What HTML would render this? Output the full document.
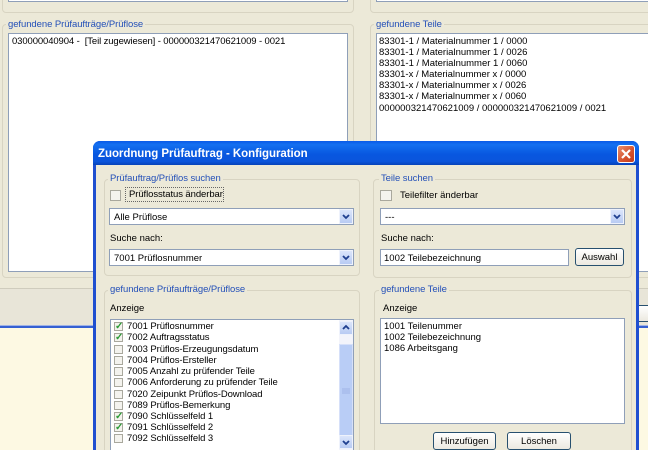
<!DOCTYPE html>
<html><head><meta charset="utf-8">
<style>
html,body{margin:0;padding:0;background:#ece9d8;}
#p{position:relative;width:648px;height:450px;overflow:hidden;background:#ece9d8;font:9.5px/11px "Liberation Sans",sans-serif;color:#000;filter:blur(.35px);}
#p div{position:absolute;box-sizing:border-box;}
.t{white-space:nowrap;height:11px;}
.n{letter-spacing:-.08px;}
.b{color:#2450b8;background:#ece9d8;padding:0 2px;letter-spacing:-.07px;}
.g{border:1px solid #d8d4c2;border-radius:4px;}
.w{background:#fff;border:1px solid #8f9fb8;}
.a{background:linear-gradient(#dbe5fb,#b8cbf3);border:1px solid #eef2fc;}
.btn{background:linear-gradient(#fff,#ece9e0);border:1px solid #27506f;border-radius:3px;text-align:center;line-height:17px;}
.c{width:10px;height:10px;background:#f4f3ee;border:1px solid #a9a89d;}
.k{color:#2a9a35;font-size:10px;line-height:8px;font-weight:bold;text-align:center;}
svg{position:absolute;left:0;top:0;}
</style></head><body><div id="p">

<!-- background window -->
<div class="g" style="left:2px;top:-20px;width:352px;height:33px"></div>
<div class="g" style="left:370px;top:-20px;width:290px;height:33px"></div>
<div class="w" style="left:8px;top:-10px;width:340px;height:12px"></div>
<div class="w" style="left:376px;top:-10px;width:280px;height:12px"></div>

<div class="g" style="left:2px;top:24px;width:352px;height:254px"></div>
<div class="g" style="left:370px;top:24px;width:290px;height:254px"></div>
<div class="t b" style="left:6px;top:19px">gefundene Prüfaufträge/Prüflose</div>
<div class="t b" style="left:374px;top:19px">gefundene Teile</div>
<div class="w" style="left:8px;top:33px;width:340px;height:239px"></div>
<div class="w" style="left:376px;top:33px;width:280px;height:239px"></div>
<div class="t" style="left:12px;top:36px;letter-spacing:-.11px">030000040904 -&nbsp; [Teil zugewiesen] - 000000321470621009 - 0021</div>
<div class="t" style="left:379px;top:36px">83301-1 / Materialnummer 1 / 0000</div>
<div class="t" style="left:379px;top:47px">83301-1 / Materialnummer 1 / 0026</div>
<div class="t" style="left:379px;top:58px">83301-1 / Materialnummer 1 / 0060</div>
<div class="t" style="left:379px;top:69px">83301-x / Materialnummer x / 0000</div>
<div class="t" style="left:379px;top:80px">83301-x / Materialnummer x / 0026</div>
<div class="t" style="left:379px;top:91px">83301-x / Materialnummer x / 0060</div>
<div class="t" style="left:379px;top:103px">000000321470621009 / 000000321470621009 / 0021</div>

<div style="left:0;top:288px;width:648px;height:38px;background:#e8e5d8;border-top:1px solid #cfccbd"></div>
<div class="btn" style="left:630px;top:305px;width:40px;height:17px"></div>
<div style="left:0;top:325px;width:648px;height:3px;background:#3560d2;border-top:1px solid #9fb2e6"></div>
<div style="left:0;top:328px;width:648px;height:122px;background:#fdf9e3"></div>

<!-- dialog -->
<div style="left:93px;top:141px;width:546px;height:320px;background:#ece9d8;border:3px solid #1f4fd0;border-radius:7px 7px 0 0"></div>
<div style="left:93px;top:141px;width:546px;height:24px;background:linear-gradient(#0a5ae8 0%,#1470f0 15%,#0857e0 55%,#0a55dc 85%,#0743b8 100%);border-radius:7px 7px 0 0"></div>
<div class="t" style="left:98px;top:148px;color:#fff;font-size:11.5px;font-weight:bold;letter-spacing:-.05px;line-height:13px;height:13px">Zuordnung Prüfauftrag - Konfiguration</div>
<div style="left:617px;top:145px;width:18px;height:18px;background:linear-gradient(135deg,#e89070,#d5502c 60%,#c23c1c);border:1px solid #fff;border-radius:3px"></div>
<svg width="648" height="450"><path d="M622 150L630 158M630 150L622 158" stroke="#fff" stroke-width="2.2" fill="none"/></svg>

<!-- upper left group -->
<div class="g" style="left:104px;top:179px;width:256px;height:97px"></div>
<div class="t b" style="left:108px;top:173px">Prüfauftrag/Prüflos suchen</div>
<div class="c" style="left:110px;top:190px;width:11px;height:11px"></div>
<div style="left:125px;top:187px;width:99px;height:15px;border:1px dotted #666"></div>
<div class="t n" style="left:129px;top:189px">Prüflosstatus änderbar</div>
<div class="w" style="left:109px;top:208px;width:245px;height:17px"></div>
<div class="t" style="left:114px;top:212px">Alle Prüflose</div>
<div class="a" style="left:339px;top:209px;width:14px;height:15px"></div>
<div class="t" style="left:110px;top:233px">Suche nach:</div>
<div class="w" style="left:109px;top:249px;width:245px;height:17px"></div>
<div class="t" style="left:114px;top:253px">7001 Prüflosnummer</div>
<div class="a" style="left:339px;top:250px;width:14px;height:15px"></div>

<!-- upper right group -->
<div class="g" style="left:373px;top:179px;width:259px;height:99px"></div>
<div class="t b" style="left:379px;top:173px">Teile suchen</div>
<div class="c" style="left:380px;top:190px;width:12px;height:11px"></div>
<div class="t" style="left:400px;top:190px">Teilefilter änderbar</div>
<div class="w" style="left:380px;top:208px;width:245px;height:17px"></div>
<div class="t" style="left:385px;top:212px">---</div>
<div class="a" style="left:610px;top:209px;width:14px;height:15px"></div>
<div class="t" style="left:381px;top:233px">Suche nach:</div>
<div class="w" style="left:380px;top:249px;width:189px;height:17px"></div>
<div class="t" style="left:384px;top:253px">1002 Teilebezeichnung</div>
<div class="btn" style="left:575px;top:248px;width:49px;height:18px">Auswahl</div>

<!-- lower left group -->
<div class="g" style="left:104px;top:290px;width:256px;height:180px"></div>
<div class="t b" style="left:108px;top:284px">gefundene Prüfaufträge/Prüflose</div>
<div class="t" style="left:110px;top:303px">Anzeige</div>
<div class="w" style="left:110px;top:319px;width:244px;height:140px"></div>
<div class="c k" style="left:114px;top:322px;width:9px;height:9px">✓</div><div class="t n" style="left:127px;top:321px">7001 Prüflosnummer</div>
<div class="c k" style="left:114px;top:333px;width:9px;height:9px">✓</div><div class="t n" style="left:127px;top:332px">7002 Auftragsstatus</div>
<div class="c" style="left:114px;top:345px;width:9px;height:9px"></div><div class="t n" style="left:127px;top:344px">7003 Prüflos-Erzeugungsdatum</div>
<div class="c" style="left:114px;top:356px;width:9px;height:9px"></div><div class="t n" style="left:127px;top:355px">7004 Prüflos-Ersteller</div>
<div class="c" style="left:114px;top:367px;width:9px;height:9px"></div><div class="t n" style="left:127px;top:366px">7005 Anzahl zu prüfender Teile</div>
<div class="c" style="left:114px;top:378px;width:9px;height:9px"></div><div class="t n" style="left:127px;top:377px">7006 Anforderung zu prüfender Teile</div>
<div class="c" style="left:114px;top:390px;width:9px;height:9px"></div><div class="t n" style="left:127px;top:389px">7020 Zeipunkt Prüflos-Download</div>
<div class="c" style="left:114px;top:401px;width:9px;height:9px"></div><div class="t n" style="left:127px;top:400px">7089 Prüflos-Bemerkung</div>
<div class="c k" style="left:114px;top:412px;width:9px;height:9px">✓</div><div class="t n" style="left:127px;top:411px">7090 Schlüsselfeld 1</div>
<div class="c k" style="left:114px;top:423px;width:9px;height:9px">✓</div><div class="t n" style="left:127px;top:422px">7091 Schlüsselfeld 2</div>
<div class="c" style="left:114px;top:434px;width:9px;height:9px"></div><div class="t n" style="left:127px;top:433px">7092 Schlüsselfeld 3</div>
<div style="left:339px;top:320px;width:14px;height:130px;background:#f3f4fb"></div>
<div class="a" style="left:339px;top:321px;width:14px;height:14px"></div>
<div style="left:339px;top:344px;width:14px;height:92px;background:#b9cdf6;border:1px solid #d6e0f9"></div>
<div class="a" style="left:339px;top:435px;width:14px;height:14px"></div>

<!-- lower right group -->
<div class="g" style="left:374px;top:290px;width:258px;height:180px"></div>
<div class="t b" style="left:379px;top:284px">gefundene Teile</div>
<div class="t" style="left:383px;top:303px">Anzeige</div>
<div class="w" style="left:380px;top:318px;width:245px;height:106px"></div>
<div class="t" style="left:384px;top:321px">1001 Teilenummer</div>
<div class="t" style="left:384px;top:332px">1002 Teilebezeichnung</div>
<div class="t" style="left:384px;top:343px">1086 Arbeitsgang</div>
<div class="btn" style="left:433px;top:432px;width:63px;height:18px">Hinzufügen</div>
<div class="btn" style="left:507px;top:432px;width:64px;height:18px">Löschen</div>

<svg width="648" height="450" fill="none" stroke="#1f3f8f" stroke-width="1.8">
<path d="M343 215L346 218L349 215M343 256L346 259L349 256M614 215L617 218L620 215M343 329L346 326L349 329M343 441L346 444L349 441"/>
<path d="M342 389H350M342 391H350M342 393H350" stroke="#9fb4e6" stroke-width="1"/>
</svg>
</div></body></html>
